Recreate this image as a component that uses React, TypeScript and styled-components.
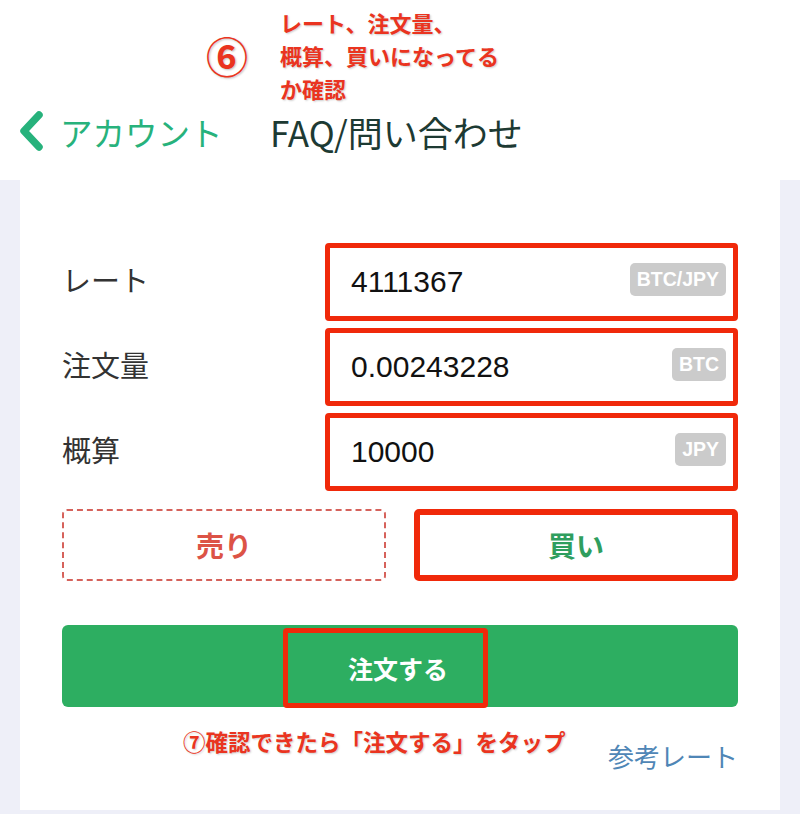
import React from "react";
import styled, { createGlobalStyle } from "styled-components";

const GlobalStyle = createGlobalStyle`
  html, body {
    margin: 0;
    padding: 0;
    background: #fff;
  }
  body {
    font-family: "Noto Sans CJK JP", "Noto Sans", sans-serif;
  }
`;

const Page = styled.div`
  width: 800px;
  height: 814px;
  display: flex;
  flex-direction: column;
  overflow: hidden;
`;

const Header = styled.header`
  height: 180px;
  background: #fff;
  display: flex;
  flex-direction: column;
`;

const Note = styled.div`
  display: flex;
  align-items: flex-start;
  height: 108px;
  padding-left: 206px;
  box-sizing: border-box;
`;

const Circled = styled.span`
  font-size: 42px;
  font-weight: 700;
  color: #ea3420;
  line-height: 1;
  margin-top: 34px;
  width: 74px;
  text-shadow: 1px 1px 2px rgba(0, 0, 0, 0.25);
`;

const NoteText = styled.div`
  font-size: 22px;
  font-weight: 700;
  line-height: 33px;
  color: #ea3420;
  margin-top: 6px;
  text-shadow: 1px 1px 2px rgba(0, 0, 0, 0.2);
`;

const Nav = styled.nav`
  display: flex;
  align-items: center;
  height: 50px;
  padding-left: 18px;
  margin-top: -2px;
`;

const Back = styled.a`
  display: flex;
  align-items: center;
  gap: 16px;
  color: #27b27c;
  font-size: 32.5px;
  text-decoration: none;
  width: 252px;
`;

const Title = styled.h1`
  margin: 0;
  font-size: 35px;
  font-weight: 400;
  color: #1d3a33;
`;

const Main = styled.main`
  flex: 1;
  background: #eeeff8;
  padding: 0 20px 4px;
  display: flex;
`;

const Card = styled.section`
  flex: 1;
  background: #fff;
  padding: 62px 42px 0 42px;
  display: flex;
  flex-direction: column;
`;

const Row = styled.div`
  display: grid;
  grid-template-columns: 263px 1fr;
  align-items: center;
  height: 80px;
  margin-bottom: 5px;
`;

const Label = styled.span`
  font-size: 29px;
  color: #333;
  margin-top: -6px;
`;

const Field = styled.div`
  height: 78px;
  box-sizing: border-box;
  border: 5px solid #f0290a;
  border-radius: 4px;
  display: flex;
  align-items: center;
  justify-content: space-between;
  padding: 0 7px 0 21px;
`;

const Value = styled.span`
  font-family: "Liberation Sans", Arial, sans-serif;
  font-size: 30px;
  color: #111;
`;

const Unit = styled.span`
  font-family: "Liberation Sans", Arial, sans-serif;
  background: #cbcbcb;
  color: #fff;
  font-size: 19.5px;
  font-weight: 700;
  height: 33px;
  line-height: 33px;
  padding: 0 7px;
  border-radius: 5px;
  margin-top: -6px;
`;

const Sides = styled.div`
  display: grid;
  grid-template-columns: 324px 324px;
  justify-content: space-between;
  margin-top: 12px;
`;

const SideButton = styled.button<{ $side: "sell" | "buy" }>`
  height: 72px;
  background: #fff;
  font-family: "Noto Sans CJK JP", sans-serif;
  font-size: 28px;
  font-weight: 700;
  border-radius: 5px;
  cursor: pointer;
  color: ${(p) => (p.$side === "sell" ? "#dc5346" : "#2f9e5e")};
  border: ${(p) =>
    p.$side === "sell" ? "2px dashed #d6625b" : "6px solid #f0290a"};
`;

const OrderButton = styled.button`
  margin-top: 44px;
  height: 82px;
  background: #2dae61;
  border: none;
  border-radius: 6px;
  display: flex;
  align-items: center;
  justify-content: center;
  cursor: pointer;
  padding: 0;
`;

const OrderMark = styled.span`
  width: 205px;
  height: 80px;
  margin: 4px 30px 0 0;
  padding-left: 26px;
  box-sizing: border-box;
  border: 5px solid #f0290a;
  border-radius: 4px;
  display: flex;
  align-items: center;
  justify-content: center;
  color: #fff;
  font-family: "Noto Sans CJK JP", sans-serif;
  font-size: 25px;
  font-weight: 700;
`;

const Footer = styled.div`
  display: flex;
  justify-content: space-between;
  align-items: flex-start;
  padding-left: 121px;
  margin-top: 18px;
`;

const Tip = styled.span`
  font-size: 22.5px;
  font-weight: 700;
  color: #ea3420;
  text-shadow: 1px 1px 2px rgba(0, 0, 0, 0.2);
`;

const RefLink = styled.a`
  font-size: 26px;
  color: #4f86b6;
  margin-top: 12px;
  text-decoration: none;
`;

const rows = [
  { label: "レート", value: "4111367", unit: "BTC/JPY" },
  { label: "注文量", value: "0.00243228", unit: "BTC" },
  { label: "概算", value: "10000", unit: "JPY" },
];

export default function App() {
  return (
    <>
      <GlobalStyle />
      <Page>
        <Header>
          <Note>
            <Circled>⑥</Circled>
            <NoteText>
              レート、注文量、
              <br />
              概算、買いになってる
              <br />
              か確認
            </NoteText>
          </Note>
          <Nav>
            <Back href="#">
              <svg width="26" height="40" viewBox="0 0 26 40">
                <polyline
                  points="21,4 6,20 21,36"
                  fill="none"
                  stroke="#27b27c"
                  strokeWidth="7.5"
                  strokeLinecap="round"
                  strokeLinejoin="round"
                />
              </svg>
              アカウント
            </Back>
            <Title>FAQ/問い合わせ</Title>
          </Nav>
        </Header>
        <Main>
          <Card>
            {rows.map((r) => (
              <Row key={r.label}>
                <Label>{r.label}</Label>
                <Field>
                  <Value>{r.value}</Value>
                  <Unit>{r.unit}</Unit>
                </Field>
              </Row>
            ))}
            <Sides>
              <SideButton $side="sell">売り</SideButton>
              <SideButton $side="buy">買い</SideButton>
            </Sides>
            <OrderButton>
              <OrderMark>注文する</OrderMark>
            </OrderButton>
            <Footer>
              <Tip>⑦確認できたら「注文する」をタップ</Tip>
              <RefLink href="#">参考レート</RefLink>
            </Footer>
          </Card>
        </Main>
      </Page>
    </>
  );
}
